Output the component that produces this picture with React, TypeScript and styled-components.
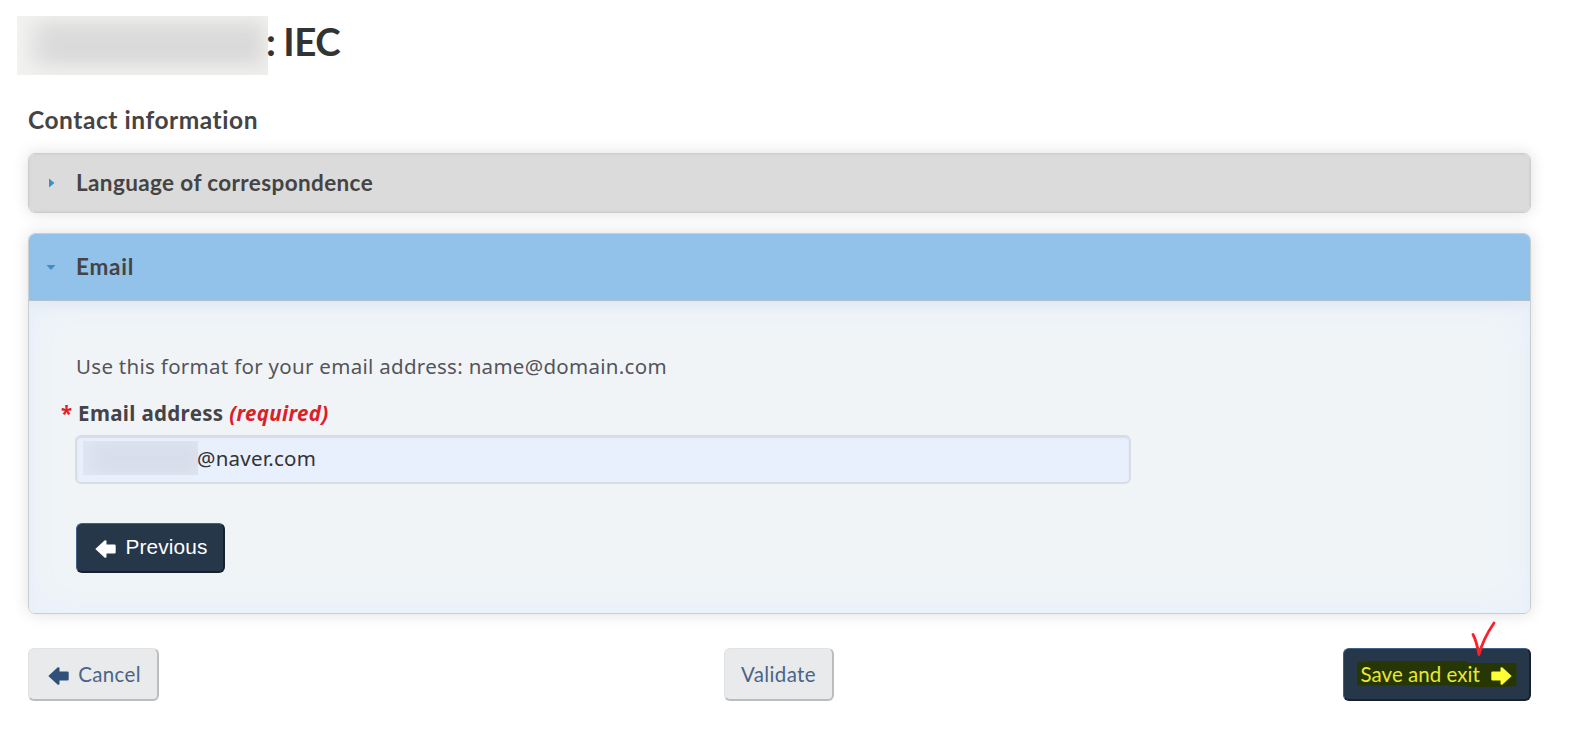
import React from 'react';
import styled, { createGlobalStyle, css } from 'styled-components';

const heading = "Lato, 'Liberation Sans', sans-serif";
const body = "'Noto Sans', 'Liberation Sans', sans-serif";

const GlobalStyle = createGlobalStyle`
  * {
    box-sizing: border-box;
  }

  body {
    margin: 0;
    background: #fff;
    color: #333;
    font-family: ${body};
    font-size: 20.5px;
  }
`;

const Page = styled.main`
  width: 1582px;
  height: 734px;
  overflow: hidden;
  padding: 16px 51px 0 28px;
`;

const TitleRow = styled.header`
  display: flex;
  height: 59px;
  margin-left: -11px;
`;

const HiddenName = styled.div`
  width: 251px;
  height: 59px;
  background: #dadada;
  box-shadow: inset 14px 0 26px 2px #f3f3f2, inset -5px 0 18px #e9e8e6, inset 0 -6px 16px #e9e9e8;
`;

const Title = styled.h1`
  margin: 0 0 0 -2px;
  font-family: ${heading};
  font-size: 38.5px;
  font-weight: 700;
  line-height: 51px;
  letter-spacing: -0.5px;
  word-spacing: -1px;
  white-space: pre;
`;

const SectionTitle = styled.h2`
  margin: 28px 0 16px;
  font-family: ${heading};
  font-size: 24.5px;
  font-weight: 700;
  line-height: 34px;
  letter-spacing: 0.55px;
  color: #444;
`;

const Panel = styled.section`
  width: 1503px;
  border: 1px solid #c9ced1;
  border-radius: 7px;
  box-shadow: 0 0 16px rgba(0, 0, 0, 0.13);
  overflow: hidden;

  & + & {
    margin-top: 20px;
  }
`;

const Summary = styled.div<{ $open?: boolean }>`
  display: flex;
  align-items: center;
  height: ${({ $open }) => ($open ? 67 : 58)}px;
  padding: 0 0 2px 17px;
  font-family: ${heading};
  font-size: 22.5px;
  font-weight: 700;
  letter-spacing: ${({ $open }) => ($open ? 0.75 : 0.38)}px;
  color: #444;
  background: ${({ $open }) => ($open ? '#92c2e9' : '#dbdbdb')};
  ${({ $open }) =>
    $open
      ? css`
          border-bottom: 1px solid #b3bfc9;
        `
      : css`
          box-shadow: inset 0 0 3px #c9c9c9;
        `}
`;

const Marker = styled.svg`
  width: 10px;
  height: 10px;
  margin: 2px 20px 0 0;
  fill: #3e8dc5;
`;

const PanelBody = styled.div`
  height: 312px;
  padding: 48px 47px 0 46px;
  background: #f0f4f7;
  box-shadow: inset 0 0 40px #e7effc, inset 0 7px 12px -5px rgba(80, 100, 125, 0.18);
`;

const Hint = styled.p`
  margin: 0 0 0 1px;
  line-height: 34px;
  letter-spacing: 0.29px;
  color: #555459;
`;

const Label = styled.label`
  display: block;
  margin: 13px 0 5px -14px;
  line-height: 34px;
  font-weight: 700;
  letter-spacing: 0.33px;
  color: #44434a;
`;

const Required = styled.span`
  color: #dc2027;
`;

const Field = styled.div`
  display: flex;
  align-items: center;
  width: 1056px;
  height: 49px;
  padding-left: 6px;
  border: 2px solid #d9dde3;
  border-radius: 6px;
  background: #e8effd;
  box-shadow: inset 0 1px 2px rgba(0, 0, 0, 0.08);
`;

const HiddenAddress = styled.div`
  width: 115px;
  height: 34px;
  margin-top: -4px;
  background: #d7deeb;
  box-shadow: inset 9px 0 18px #e0e6f3, inset -7px 0 10px #dcdfe8;
`;

const Address = styled.span`
  margin: -3px 0 0 -1px;
  line-height: 30px;
  letter-spacing: 0.25px;
`;

const Button = styled.button<{ $dark?: boolean; $width: number }>`
  display: flex;
  align-items: center;
  justify-content: center;
  width: ${({ $width }) => $width}px;
  height: 53px;
  padding: 0;
  font-family: ${heading};
  font-size: 20.5px;
  letter-spacing: 0.35px;
  border-style: solid;
  border-width: 1px 2px 2px 1px;
  border-radius: 6px;
  color: ${({ $dark }) => ($dark ? '#fff' : '#4a6488')};
  background: ${({ $dark }) => ($dark ? '#26374a' : '#e9eaeb')};
  border-color: ${({ $dark }) => ($dark ? '#3f6187 #17212c #17212c #3f6187' : '#e2e3e4 #bdbdbe #bdbdbe #e2e3e4')};
`;

const PreviousButton = styled(Button)`
  height: 50px;
  margin: 39px 0 0 1px;
  padding: 0 0 1px 3px;
  font-family: 'Liberation Sans', Arial, sans-serif;
  font-size: 20.8px;
  letter-spacing: 0.15px;
`;

const ArrowIcon = styled.svg<{ $flip?: boolean }>`
  width: 21px;
  height: 18px;
  margin-top: 4px;
  fill: currentColor;
  transform: ${({ $flip }) => ($flip ? 'scaleX(-1)' : 'none')};
`;

const ButtonText = styled.span`
  margin-left: 9px;
  line-height: 30px;
`;

const CancelButton = styled(Button)`
  padding-left: 3px;

  svg {
    margin-top: 3px;
    fill: #2f5079;
  }
`;

const ValidateButton = styled(Button)`
  margin-left: -1px;
`;

const Actions = styled.footer`
  display: grid;
  grid-template-columns: 1fr auto 1fr;
  width: 1503px;
  margin-top: 34px;
`;

const SaveWrap = styled.div`
  position: relative;
  justify-self: end;
`;

const Highlight = styled.span`
  display: flex;
  align-items: center;
  justify-content: space-between;
  width: 160px;
  height: 26px;
  padding: 0 5px 0 4px;
  color: #ffff36;
  background: #263704;
  clip-path: polygon(0 6%, 10% 0, 69% 0, 69% 8%, 100% 8%, 100% 96%, 92% 100%, 72% 100%, 64% 94%, 0 94%);
`;

const SaveText = styled.span`
  letter-spacing: 0.05px;
  color: #e8e832;
  white-space: nowrap;
`;

const Check = styled.svg`
  position: absolute;
  top: -29px;
  left: 124px;
  width: 30px;
  height: 38px;
`;

const Arrow = ({ flip }: { flip?: boolean }) => (
  <ArrowIcon $flip={flip} viewBox="0 0 21 18">
    <path d="M0.3 9 9.5 0.6Q11.5 -0.4 11.5 1.5V4.5H19.5Q20.7 4.5 20.7 5.7V12.3Q20.7 13.5 19.5 13.5H11.5V16.5Q11.5 18.4 9.5 17.4Z" />
  </ArrowIcon>
);

const App: React.FC = () => {
  return (
    <Page>
      <GlobalStyle />
      <TitleRow>
        <HiddenName />
        <Title>: IEC</Title>
      </TitleRow>
      <SectionTitle>Contact information</SectionTitle>
      <Panel>
        <Summary>
          <Marker viewBox="0 0 10 10">
            <path d="M3 0.5 8.5 5 3 9.5Z" />
          </Marker>
          Language of correspondence
        </Summary>
      </Panel>
      <Panel>
        <Summary $open>
          <Marker viewBox="0 0 10 10">
            <path d="M0.5 3H9.5L5 8Z" />
          </Marker>
          Email
        </Summary>
        <PanelBody>
          <Hint>Use this format for your email address: name@domain.com</Hint>
          <Label>
            <Required>*</Required> Email address <Required as="em">(required)</Required>
          </Label>
          <Field>
            <HiddenAddress />
            <Address>@naver.com</Address>
          </Field>
          <PreviousButton $dark $width={149}>
            <Arrow />
            <ButtonText>Previous</ButtonText>
          </PreviousButton>
        </PanelBody>
      </Panel>
      <Actions>
        <CancelButton $width={131}>
          <Arrow />
          <ButtonText>Cancel</ButtonText>
        </CancelButton>
        <ValidateButton $width={110}>Validate</ValidateButton>
        <SaveWrap>
          <Button $dark $width={188}>
            <Highlight>
              <SaveText>Save and exit</SaveText>
              <Arrow flip />
            </Highlight>
          </Button>
          <Check viewBox="0 0 30 38" fill="none" stroke="#fb202a" strokeWidth="2.8" strokeLinecap="round" strokeLinejoin="round">
            <path d="M6 15.5Q9.5 22 12 35.5Q16 20 27 4" />
          </Check>
        </SaveWrap>
      </Actions>
    </Page>
  );
};

export default App;
